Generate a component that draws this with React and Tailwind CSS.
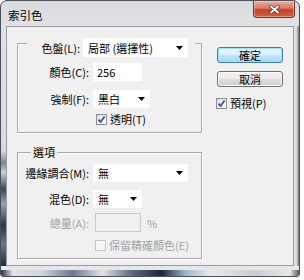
import React from "react";

const Arrow = () => (
  <svg width="7" height="4" viewBox="0 0 7 4">
    <path d="M0 0h7L3.5 4z" fill="#000" />
  </svg>
);

const Check = ({ checked, disabled }) => (
  <span
    className={
      disabled
        ? "flex h-[11px] w-[11px] shrink-0 items-center justify-center border border-[#c6c6c6] bg-[#f6f6f6]"
        : "flex h-[11px] w-[11px] shrink-0 items-center justify-center border border-[#8e8f8f] bg-[linear-gradient(135deg,#dcdcdc,#ffffff)]"
    }
  >
    {checked && (
      <svg width="9" height="9" viewBox="0 0 9 9">
        <path d="M1.5 4.6 3.6 7 7.6 1.4" fill="none" stroke="#2c4da3" strokeWidth="1.7" />
      </svg>
    )}
  </span>
);

const Select = ({ value, w }) => (
  <div className={`flex h-full items-center justify-between bg-white pl-[5px] pr-[5px] ${w}`}>
    <span>{value}</span>
    <Arrow />
  </div>
);

const Label = ({ children, disabled }) => (
  <div className={`w-[73px] pr-[2px] text-right ${disabled ? "text-[#a3a3a3]" : ""}`}>{children}</div>
);

const groupBox =
  "w-[185px] border border-[#a9a9a9] shadow-[1px_1px_0_#fff,inset_1px_1px_0_#fff]";

const App = () => {
  return (
    <div className="h-[280px] w-[304px] bg-white font-['Noto_Sans_CJK_TC',sans-serif] text-[11px] leading-[14px] text-black">
      <div className="flex h-[277px] w-[300px] flex-col rounded-t-[7px] rounded-b-[3px] border border-[#4b4f55] bg-[linear-gradient(to_bottom,#d9dcdf,#eaebed_25%,#e3e5e7)]">
        {/* title bar */}
        <div className="flex h-[25px] shrink-0 items-start justify-between">
          <div className="ml-[7px] mt-[7px] text-[11.5px]">索引色</div>
          <div className="mr-[4px] flex h-[17px] w-[42px] items-center justify-center rounded-b-[4px] border border-t-0 border-[#7b3325] bg-[linear-gradient(to_bottom,#eab0a2,#d77863_45%,#c2402a_55%,#d4613f)] shadow-[inset_0_0_0_1px_rgba(255,255,255,0.35)]">
            <svg width="11" height="9" viewBox="0 0 11 9">
              <path d="M2 1.5 9 7.5M9 1.5 2 7.5" stroke="#6b2418" strokeWidth="3.4" strokeLinecap="round" />
              <path d="M2 1.5 9 7.5M9 1.5 2 7.5" stroke="#fff" strokeWidth="2" strokeLinecap="round" />
            </svg>
          </div>
        </div>

        {/* frame sides + client */}
        <div className="flex h-[240px] shrink-0">
          <div className="w-[5px] bg-[linear-gradient(to_bottom,#dfe2e6,#d7dadf_52%,#7d8599_57%,#c9ceda_61%,#3b4460_68%,#9aa3bb_74%,#2c3450_83%,#6b7590_91%,#222a40)]" />
          <div className="flex w-[288px] border border-[#9a9a9a] bg-[#f0f0f0]">
            {/* left column */}
            <div className="ml-[10px] mt-[16px] flex flex-col">
              <div className={`${groupBox} h-[90px]`}>
                <div className="-mt-[6px] flex h-[19px] items-center">
                  <div className="ml-[9px] flex h-full w-[56px] items-center justify-end bg-[#f0f0f0] pr-[3px]">
                    色盤(L):
                  </div>
                  <Select value="局部 (選擇性)" w="w-[105px]" />
                  <div className="h-full w-[7px] bg-[#f0f0f0]" />
                </div>
                <div className="mt-[6px] flex h-[18px] items-center">
                  <Label>顏色(C):</Label>
                  <div className="ml-[2px] flex h-full w-[49px] items-center bg-white pl-[4px]">256</div>
                </div>
                <div className="mt-[9px] flex h-[18px] items-center">
                  <Label>強制(F):</Label>
                  <div className="ml-[2px] h-full">
                    <Select value="黑白" w="w-[57px]" />
                  </div>
                </div>
                <div className="mt-[4px] flex h-[14px] items-center">
                  <div className="ml-[78px]">
                    <Check checked />
                  </div>
                  <span className="ml-[3px]">透明(T)</span>
                </div>
              </div>

              <div className={`${groupBox} mt-[19px] h-[107px]`}>
                <div className="-mt-[8px] ml-[13px] w-fit bg-[#f0f0f0] px-[2px]">選項</div>
                <div className="mt-[5px] flex h-[18px] items-center">
                  <Label>邊緣調合(M):</Label>
                  <div className="ml-[2px] h-full">
                    <Select value="無" w="w-[95px]" />
                  </div>
                </div>
                <div className="mt-[8px] flex h-[18px] items-center">
                  <Label>混色(D):</Label>
                  <div className="ml-[2px] h-full">
                    <Select value="無" w="w-[49px]" />
                  </div>
                </div>
                <div className="mt-[5px] flex h-[19px] items-center">
                  <Label disabled>總量(A):</Label>
                  <div className="ml-[4px] h-full w-[46px] border border-[#c8c8c8] bg-[#f0f0f0]" />
                  <span className="ml-[6px] text-[#a3a3a3]">%</span>
                </div>
                <div className="mt-[6px] flex h-[14px] items-center">
                  <div className="ml-[77px]">
                    <Check disabled />
                  </div>
                  <span className="ml-[3px] text-[#a3a3a3]">保留精確顏色(E)</span>
                </div>
              </div>
            </div>

            {/* right column */}
            <div className="ml-[15px] mt-[20px] flex flex-col">
              <div className="flex h-[16px] w-[66px] items-center justify-center rounded-[3px] border border-[#3c7fb1] bg-[linear-gradient(to_bottom,#eaf6fd,#d9f0fc_50%,#bee6fd_51%,#a7d9f5)] shadow-[inset_0_0_0_1px_#9fe2f7]">
                確定
              </div>
              <div className="mt-[8px] flex h-[16px] w-[66px] items-center justify-center rounded-[3px] border border-[#707070] bg-[linear-gradient(to_bottom,#f2f2f2,#ebebeb_50%,#dddddd_51%,#cfcfcf)] shadow-[inset_0_0_0_1px_#fcfcfc]">
                取消
              </div>
              <div className="-ml-[1px] mt-[9px] flex h-[14px] items-center">
                <Check checked />
                <span className="ml-[3px]">預視(P)</span>
              </div>
            </div>
          </div>
          <div className="w-[5px] bg-[linear-gradient(to_right,#e8e8e8,#d4d4d4_50%,#777777)]" />
        </div>

        {/* bottom frame */}
        <div className="flex h-[10px] shrink-0 flex-col">
          <div className="h-[4px] bg-[#e6e7e9]" />
          <div className="h-[6px] rounded-b-[2px] bg-[linear-gradient(to_right,#2a2f40,#dfe3ea_4%,#cdd3dd_14%,#6f7890_24%,#e0e4ea_34%,#5d6880_44%,#1d2540_54%,#9fb6cc_62%,#e8ebee_70%,#c9cdd2_85%,#e6e8ea_97%,#555)]" />
        </div>
      </div>
    </div>
  );
};

export default App;
